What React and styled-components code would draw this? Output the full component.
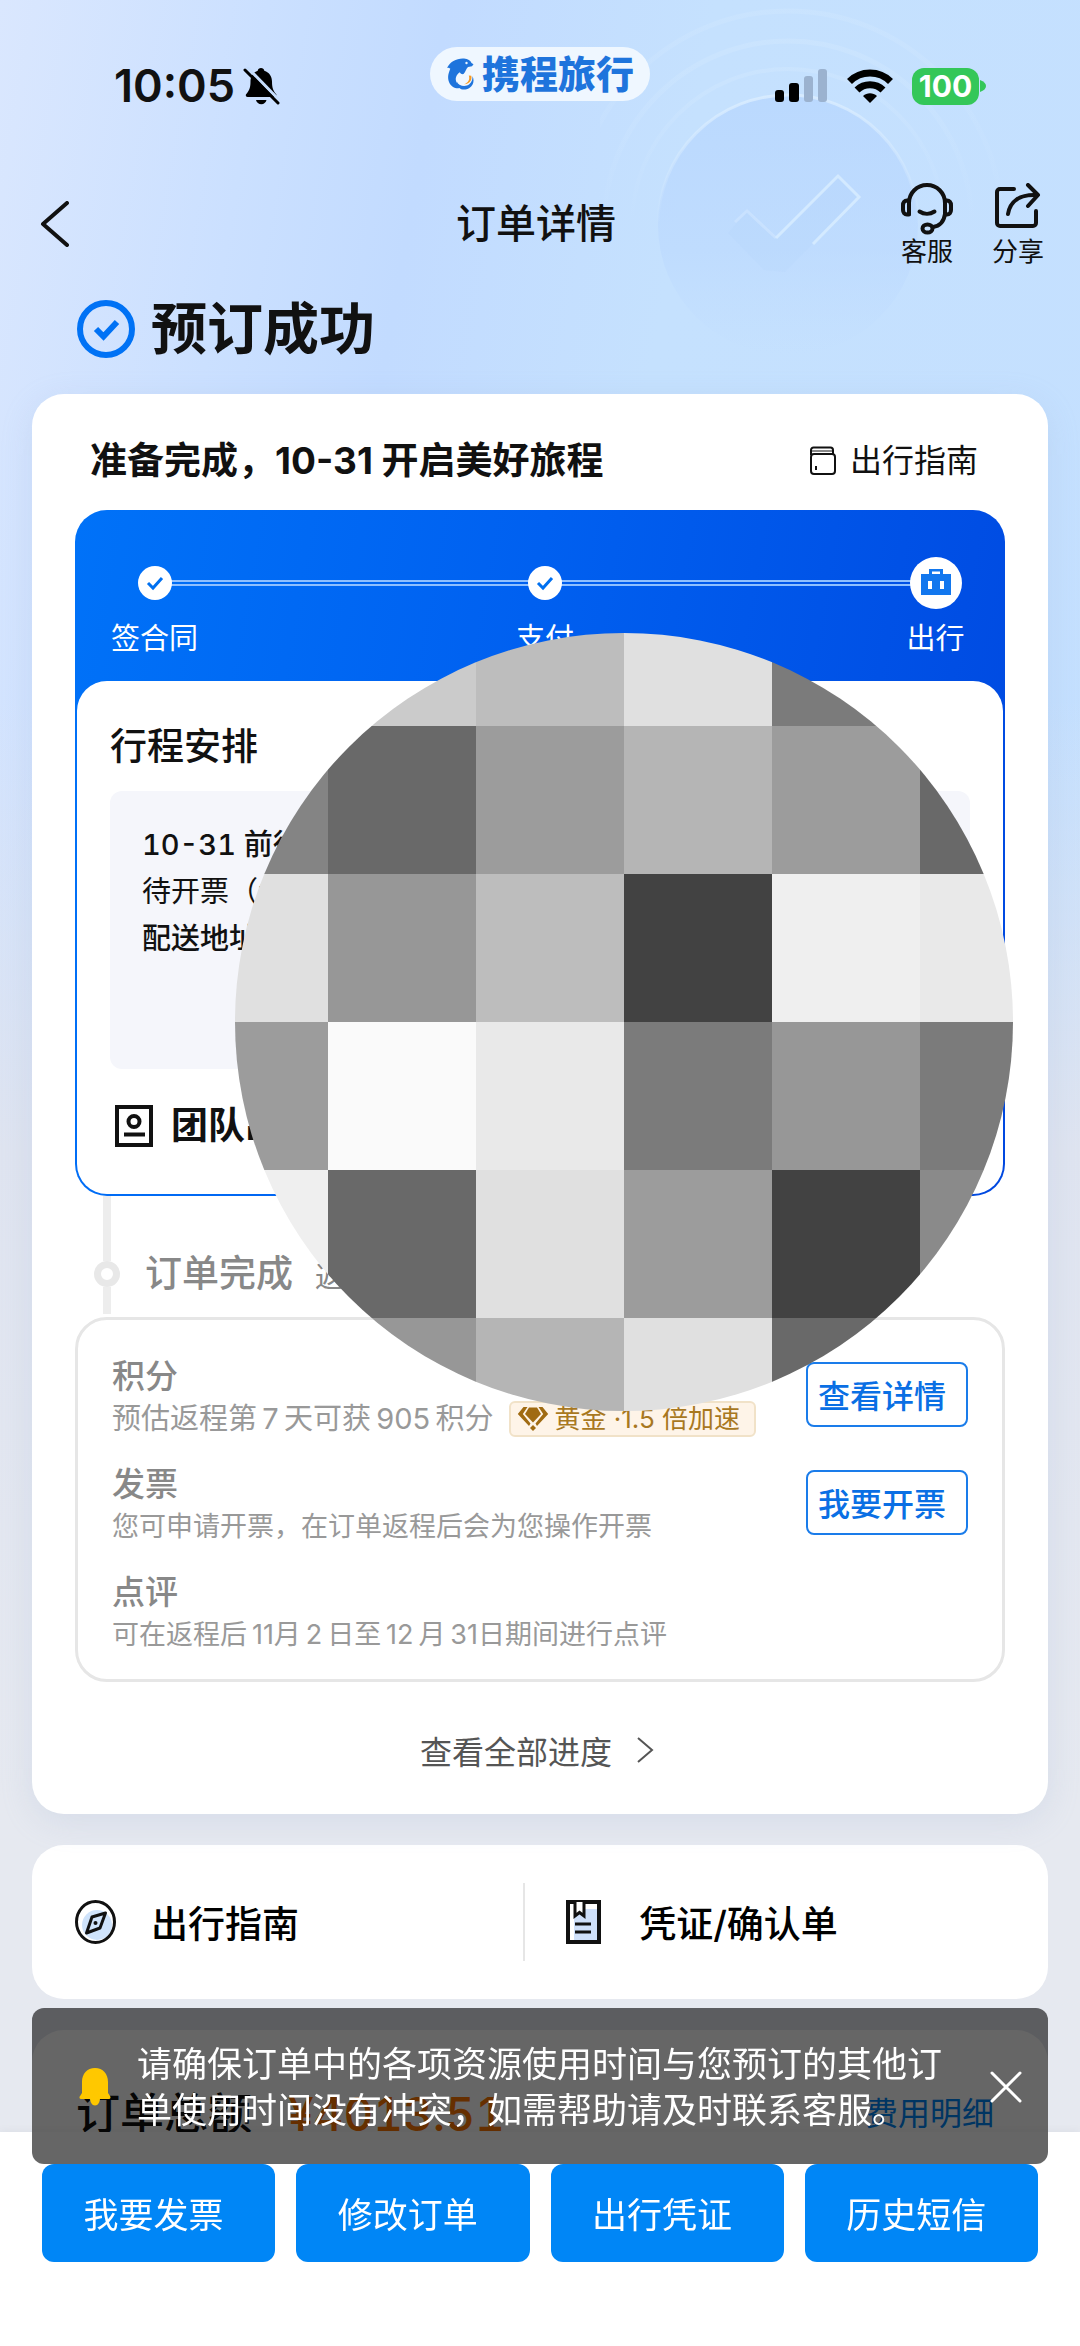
import React, { useState } from "react";
import styled, { createGlobalStyle } from "styled-components";

const ink = "#111";
const blue = "#0070f0";
const brand = "#0086f6";

const steps = [
  { label: "签合同", done: true },
  { label: "支付", done: true },
  { label: "出行", done: false },
];

const tasks = [
  {
    title: "积分",
    text: "预估返程第\u20097\u2009天可获\u2009905\u2009积分",
    large: true,
    tag: "黄金 ·1.5 倍加速",
    action: "查看详情",
  },
  { title: "发票", text: "您可申请开票，在订单返程后会为您操作开票", action: "我要开票" },
  { title: "点评", text: "可在返程后\u200911月\u20092\u2009日至\u200912\u2009月\u200931日期间进行点评" },
];

const actions = ["我要发票", "修改订单", "出行凭证", "历史短信"];

// grey levels of the privacy cover, row by row
const mosaic = [
  ["#bdbdbd", "#cbcbcb", "#bdbdbd", "#e0e0e0", "#7b7b7b", "#7b7b7b"],
  ["#848484", "#696969", "#9c9c9c", "#b5b5b5", "#9c9c9c", "#696969"],
  ["#e0e0e0", "#979797", "#bdbdbd", "#424242", "#efefef", "#e9e9e9"],
  ["#9c9c9c", "#fafafa", "#e9e9e9", "#7b7b7b", "#979797", "#7b7b7b"],
  ["#efefef", "#696969", "#e0e0e0", "#9c9c9c", "#424242", "#8a8a8a"],
  ["#979797", "#979797", "#b5b5b5", "#e0e0e0", "#696969", "#696969"],
];

const HeroArt = () => (
  <ArtSvg width="480" height="394" viewBox="600 0 480 394" fill="none">
    <defs>
      <linearGradient id="disc" x1="0" y1="0" x2="0" y2="1">
        <stop offset="0" stopColor="#b8d7fe" stopOpacity="0.8" />
        <stop offset="0.6" stopColor="#b9d7fe" stopOpacity="0.5" />
        <stop offset="1" stopColor="#bddafe" stopOpacity="0" />
      </linearGradient>
      <linearGradient id="arc" x1="0" y1="0" x2="0" y2="1">
        <stop offset="0" stopColor="#dceeff" stopOpacity="0.8" />
        <stop offset="0.5" stopColor="#dceeff" stopOpacity="0" />
      </linearGradient>
    </defs>
    <circle cx="788" cy="225" r="130" fill="url(#disc)" stroke="url(#arc)" strokeWidth="3" />
    <circle cx="788" cy="225" r="156" stroke="url(#arc)" strokeWidth="4" opacity="0.3" />
    <circle cx="788" cy="225" r="184" stroke="url(#arc)" strokeWidth="5" opacity="0.3" />
    <circle cx="788" cy="225" r="214" stroke="url(#arc)" strokeWidth="5" opacity="0.25" />
    <path d="M764 270l-36-37 19-22 29 27 62-62 21 21-74 75z" fill="#aecffb" opacity="0.15" />
    <path d="M735 222l12-11 29 27" stroke="#d0e6ff" strokeWidth="3" opacity="0.6" />
    <path d="M776 238l62-62 21 21-46 47" stroke="#d6ebff" strokeWidth="3" opacity="0.9" />
  </ArtSvg>
);

const MutedBell = () => (
  <svg width="37" height="38" viewBox="0 0 37 38">
    <path
      d="M18 1c1.800 0 3 1 3.300 2.700C26.500 5.400 29 9.500 29 14.500c0 7 1.500 9.500 4 12.500.9 1.100.5 3-1.300 3H4.600c-1.800 0-2.300-1.900-1.300-3 2.500-3 4.200-5.500 4.200-12.500C7.500 9.500 9.700 5.400 14.700 3.700 15 2 16.200 1 18 1z"
      fill="#000"
    />
    <path d="M13 33h10.500c-.6 2.600-2.600 4.300-5.200 4.300S13.600 35.600 13 33z" fill="#000" />
    <path d="M4 0l33 34" stroke="#c5ddfd" strokeWidth="3" />
    <path d="M2 3l33 33" stroke="#000" strokeWidth="3" strokeLinecap="round" />
  </svg>
);

const Dolphin = () => (
  <svg width="30" height="32" viewBox="0 0 30 32">
    <path
      d="M1 10C4 3.500 11 0 18 .5c4 .2 6.500 2 7.500 4.500l2 1.300-1.500 2-4 .8c-2 2-2.200 4.500-4.500 7-2 .2-3-.6-3.700-1.900C10 17 8.500 21 11 25c1.400 2.300 4 3.600 7.500 3.300C13 32 5.500 30.500 3 24 1 18.500 3 14 4.300 10.800 3 9.600 2 9.600 1 10z"
      fill="#1e74dc"
    />
    <path d="M11 24c2 4 8.500 5.500 12.500 2 2.600-2.400 3.200-5.200 2.900-8 2.300 4.500 1 9.600-3 12-6 3.500-12.500 1-12.400-6z" fill="#1e74dc" />
    <path d="M22.800 17.500c1.400 4-.6 7.300-4.800 8.800 5 .2 8.300-3.500 7.300-8.500z" fill="#f59a23" />
    <circle cx="20.500" cy="5" r="1.200" fill="#eaf5ff" />
  </svg>
);

const Signal = () => (
  <svg width="53" height="34" viewBox="0 0 53 34">
    <rect x="0" y="21" width="9" height="12" rx="3" fill="#000" />
    <rect x="14" y="14" width="10" height="19" rx="3" fill="#000" />
    <rect x="29" y="7" width="9" height="26" rx="3" fill="#9bb2cf" />
    <rect x="43" y="0" width="9" height="33" rx="3" fill="#9bb2cf" />
  </svg>
);

const Wifi = () => (
  <svg width="46" height="34" viewBox="0 0 46 34" fill="none" stroke="#000" strokeWidth="7">
    <path d="M2.500 12.500a29 29 0 0 1 41 0" />
    <path d="M10 21a18.500 18.500 0 0 1 26 0" />
    <path d="M16 27c4-3.700 10-3.700 14 0l-7 7z" fill="#000" stroke="none" />
  </svg>
);

const Battery = () => (
  <BatteryBox>
    <BatteryBody>100</BatteryBody>
    <svg width="6" height="12" viewBox="0 0 6 12">
      <path d="M0 0c4 1.500 6 3.500 6 6s-2 4.500-6 6z" fill="#34c759" />
    </svg>
  </BatteryBox>
);

const BackIcon = () => (
  <svg width="30" height="46" viewBox="0 0 30 46" fill="none" stroke={ink} strokeWidth="4" strokeLinecap="round" strokeLinejoin="round">
    <path d="M27 2L3 23l24 21" />
  </svg>
);

const HeadsetIcon = () => (
  <svg width="54" height="52" viewBox="0 0 54 52" fill="none" stroke={ink} strokeWidth="4" strokeLinecap="round" strokeLinejoin="round">
    <path d="M9 31V20C9 10 17 2 27 2s18 8 18 18v11" />
    <path d="M9 17.500H7c-2.500 0-4 2-4 4.500v5c0 2.500 1.500 4.500 4 4.500h2" />
    <path d="M45 17.500h2c2.500 0 4 2 4 4.500v5c0 2.500-1.500 4.500-4 4.500h-2" />
    <path d="M45 31c-1 7-5 12-12 13" />
    <ellipse cx="27.500" cy="45.500" rx="5" ry="4" />
    <path d="M19.500 28.500c4.500 3 10.500 3 15 0" />
  </svg>
);

const ShareIcon = () => (
  <svg width="46" height="46" viewBox="0 0 46 46" fill="none" stroke={ink} strokeWidth="4" strokeLinecap="round" strokeLinejoin="round">
    <path d="M19 6H5a3 3 0 0 0-3 3v31a3 3 0 0 0 3 3h33a3 3 0 0 0 3-3V28" />
    <path d="M13 31c2-12 11-20 29-19" />
    <path d="M33 2l10 10-10 11" />
  </svg>
);

const SuccessIcon = () => (
  <svg width="58" height="58" viewBox="0 0 58 58" fill="none" stroke="#0072f5">
    <circle cx="29" cy="29" r="26" strokeWidth="6" />
    <path d="M19 29l7.500 7.500L40 22" strokeWidth="6" />
  </svg>
);

const GuideIcon = () => (
  <svg width="28" height="30" viewBox="0 0 28 30" fill="none" stroke={ink} strokeWidth="2">
    <path d="M2 9V4a2.500 2.500 0 0 1 2.500-2.500h17A2.500 2.500 0 0 1 24 4v4" />
    <path d="M2 5h22" strokeWidth="1" />
    <rect x="2" y="8" width="24" height="20" rx="3" />
    <path d="M7 20v4" />
  </svg>
);

const CheckDot = () => (
  <svg width="34" height="34" viewBox="0 0 34 34" fill="none">
    <circle cx="17" cy="17" r="17" fill="#fff" />
    <path d="M10 17l5 5 9-10" stroke={blue} strokeWidth="3" />
  </svg>
);

const BagDot = () => (
  <svg width="52" height="52" viewBox="0 0 52 52">
    <circle cx="26" cy="26" r="26" fill="#fff" />
    <path d="M11 17h8v-5h14v5h8v21H11z" fill="#1277ee" />
    <path d="M22 17v-2.500h8V17z" fill="#fff" />
    <path d="M18 24h4v8h-4zM30 24h4v8h-4z" fill="#fff" />
  </svg>
);

const TeamIcon = () => (
  <svg width="38" height="42" viewBox="0 0 38 42" fill="none" stroke={ink} strokeWidth="4">
    <rect x="2" y="2" width="34" height="38" />
    <circle cx="19" cy="16.500" r="5.500" />
    <path d="M9 29.500h21" />
  </svg>
);

const Gem = () => (
  <svg width="32" height="26" viewBox="0 0 32 26" fill="#a06b12">
    <path d="M6.500 1h4L5.800 8l7.700 9.500L12 20 .8 8z" />
    <path d="M25.500 1h-4l4.700 7-7.700 9.500L20 20 31.200 8z" />
    <path d="M12 1.500h8L24 8l-8 8.500L8 8z" />
    <path d="M16 19l3 3-3 3-3-3z" />
  </svg>
);

const MoreIcon = () => (
  <svg width="18" height="28" viewBox="0 0 18 28" fill="none" stroke="#555" strokeWidth="2">
    <path d="M2 2l14 12L2 26" />
  </svg>
);

const CompassIcon = () => (
  <svg width="41" height="44" viewBox="0 0 41 44" fill="none" stroke={ink} strokeWidth="3">
    <circle cx="22" cy="25" r="15" fill="#cfe3fb" stroke="none" />
    <ellipse cx="20.500" cy="22" rx="19" ry="20.500" />
    <path d="M30.500 13L17 17l-5.500 16L25 28z" strokeLinejoin="round" />
    <circle cx="20.500" cy="23" r="2" fill={ink} stroke="none" />
  </svg>
);

const VoucherIcon = () => (
  <svg width="41" height="44" viewBox="0 0 41 44" fill="none" stroke={ink} strokeWidth="4">
    <path d="M11 9h24v32H11z" fill="#cfe0fa" stroke="none" />
    <rect x="5" y="2" width="31" height="40" />
    <path d="M12 2v14l4.500-3.500L21 16V2" fill="#fff" strokeWidth="3" />
    <path d="M12 24h16M12 32h16" strokeWidth="3" />
  </svg>
);

const BellIcon = () => (
  <svg width="34" height="40" viewBox="0 0 34 40" fill="#ffc800">
    <path d="M17 1c8 0 13 6 13 14v11l2 3c1 1.500.5 3-1 3H3c-1.500 0-2-1.500-1-3L4 26V15C4 7 9 1 17 1z" />
    <path d="M12 31h10c0 4-2 7.500-5 7.500S12 35 12 31z" />
  </svg>
);

const CloseIcon = () => (
  <svg width="32" height="32" viewBox="0 0 32 32" stroke="#fff" strokeWidth="3" strokeLinecap="round">
    <path d="M2 2l28 28M30 2L2 30" />
  </svg>
);

const Cover = () => (
  <CoverSvg width="778" height="778" viewBox="55 55 778 778" aria-hidden="true">
    <defs>
      <clipPath id="round">
        <circle cx="444" cy="444" r="389" />
      </clipPath>
    </defs>
    <g clipPath="url(#round)">
      {mosaic.map((row, y) =>
        row.map((color, x) => (
          <rect key={`${x}-${y}`} x={x * 148} y={y * 148} width="148" height="148" fill={color} />
        ))
      )}
    </g>
  </CoverSvg>
);

const App = () => {
  const [showNotice, setShowNotice] = useState(true);

  return (
    <Page>
      <GlobalStyle />
      <Hero>
        <HeroArt />
        <StatusBar>
          <Clock>
            10:05
            <MutedBell />
          </Clock>
          <BrandPill>
            <Dolphin />
            携程旅行
          </BrandPill>
          <Indicators>
            <Signal />
            <Wifi />
            <Battery />
          </Indicators>
        </StatusBar>

        <NavBar>
          <BackButton aria-label="返回">
            <BackIcon />
          </BackButton>
          <NavTitle>订单详情</NavTitle>
          <NavActions>
            <NavAction>
              <NavIcon><HeadsetIcon /></NavIcon>
              客服
            </NavAction>
            <NavAction>
              <NavIcon><ShareIcon /></NavIcon>
              分享
            </NavAction>
          </NavActions>
        </NavBar>

        <Headline>
          <SuccessIcon />
          <h1>预订成功</h1>
        </Headline>
      </Hero>

      <Content>
        <ProgressCard>
          <CardHeader>
            <CardTitle>准备完成，10-31 开启美好旅程</CardTitle>
            <GuideLink href="#guide">
              <GuideIcon />
              出行指南
            </GuideLink>
          </CardHeader>

          <Journey>
            <Steps>
              {steps.map((step) => (
                <Step key={step.label}>
                  <StepDot>{step.done ? <CheckDot /> : <BagDot />}</StepDot>
                  {step.label}
                </Step>
              ))}
            </Steps>
            <Plan>
              <PlanTitle>行程安排</PlanTitle>
              <PlanBox>
                <PlanLine $strong>10-31 前往</PlanLine>
                <PlanLine>待开票（纸</PlanLine>
                <PlanLine $strong>配送地址</PlanLine>
              </PlanBox>
              <TeamRow>
                <TeamIcon />
                团队出
              </TeamRow>
            </Plan>
          </Journey>

          <Finish>
            <Track>
              <TrackLine $size={65} />
              <TrackRing />
              <TrackLine $size={27} />
            </Track>
            <FinishTitle>订单完成</FinishTitle>
            <FinishNote>返</FinishNote>
          </Finish>

          <Tasks>
            {tasks.map((task) => (
              <Task key={task.title}>
                <div>
                  <TaskTitle>{task.title}</TaskTitle>
                  <TaskText $large={task.large}>
                    {task.text}
                    {task.tag && (
                      <Tag>
                        <Gem />
                        {task.tag}
                      </Tag>
                    )}
                  </TaskText>
                </div>
                {task.action && <OutlineButton>{task.action}</OutlineButton>}
              </Task>
            ))}
          </Tasks>

          <MoreLink href="#progress">
            查看全部进度
            <MoreIcon />
          </MoreLink>

          <Cover />
        </ProgressCard>

        <QuickCard>
          <QuickLink href="#guide">
            <CompassIcon />
            出行指南
          </QuickLink>
          <Divider />
          <QuickLink href="#voucher">
            <VoucherIcon />
            凭证/确认单
          </QuickLink>
        </QuickCard>

        <TotalCard>
          <TotalLabel>订单总额</TotalLabel>
          <TotalPrice>¥4013.51</TotalPrice>
          <FeeLink href="#fees">费用明细</FeeLink>
        </TotalCard>
      </Content>

      <BottomBar>
        {actions.map((label) => (
          <PrimaryButton key={label}>{label}</PrimaryButton>
        ))}
      </BottomBar>

      {showNotice && (
        <Notice role="status">
          <BellIcon />
          <NoticeText>
            请确保订单中的各项资源使用时间与您预订的其他订单使用时间没有冲突，如需帮助请及时联系客服。
          </NoticeText>
          <CloseButton aria-label="关闭" onClick={() => setShowNotice(false)}>
            <CloseIcon />
          </CloseButton>
        </Notice>
      )}
    </Page>
  );
};

export default App;

const GlobalStyle = createGlobalStyle`
  *, *::before {
    box-sizing: border-box;
  }
  body {
    margin: 0;
    color: ${ink};
    font-family: Inter, "Noto Sans CJK SC", sans-serif;
  }
  h1, h2, h3, p {
    margin: 0;
    font-size: inherit;
    font-weight: inherit;
  }
  button {
    padding: 0;
    border: none;
    background: none;
    color: inherit;
    font: inherit;
    cursor: pointer;
  }
  a {
    color: inherit;
    text-decoration: none;
  }
  svg {
    display: block;
    flex: none;
  }
`;

const Page = styled.div`
  min-height: 100vh;
  padding-bottom: 175px;
  background:
    linear-gradient(180deg, rgba(230, 233, 240, 0) 0, rgba(230, 233, 240, 0) 700px, #dfe4f0 1150px, #e6e9f0 1800px),
    linear-gradient(100deg, #dae7fe 0, #cbe0ff 18%, #c2dbff 30%, #c5e1fe 48%, #c4dfff 100%);
`;

const Hero = styled.header`
  position: relative;
`;

const ArtSvg = styled.svg`
  position: absolute;
  top: 0;
  right: 0;
`;

const StatusBar = styled.div`
  position: relative;
  display: grid;
  grid-template-columns: 1fr auto 1fr;
  align-items: start;
  height: 170px;
  padding: 47px 94px 0;
`;

const Clock = styled.div`
  display: flex;
  align-items: center;
  gap: 8px;
  margin-top: 12px;
  padding-left: 20px;
  font-size: 45px;
  font-weight: 600;
  line-height: 54px;
`;

const BrandPill = styled.div`
  display: flex;
  align-items: center;
  gap: 6px;
  height: 54px;
  padding: 0 16px;
  border-radius: 27px;
  background: #eff7ff;
  color: #1e74dc;
  font-size: 38px;
  font-weight: 900;
  line-height: 54px;
`;

const Indicators = styled.div`
  display: flex;
  align-items: center;
  justify-content: flex-end;
  gap: 19px;
  height: 54px;
  margin-top: 12px;
`;

const BatteryBox = styled.div`
  display: flex;
  align-items: center;
  gap: 1px;
`;

const BatteryBody = styled.div`
  width: 67px;
  height: 37px;
  border-radius: 12px;
  background: #34c759;
  color: #fff;
  font-size: 30px;
  font-weight: 700;
  line-height: 37px;
  text-align: center;
`;

const NavBar = styled.nav`
  position: relative;
  display: grid;
  grid-template-columns: 1fr auto 1fr;
  align-items: center;
  height: 108px;
  padding: 0 36px 0 28px;
`;

const BackButton = styled.button`
  justify-self: start;
  padding: 10px 12px;
`;

const NavTitle = styled.h2`
  font-size: 40px;
  font-weight: 500;
  line-height: 50px;
`;

const NavActions = styled.div`
  display: flex;
  justify-content: flex-end;
  gap: 38px;
  padding-top: 4px;
`;

const NavAction = styled.button`
  display: flex;
  flex-direction: column;
  align-items: center;
  font-size: 26px;
  line-height: 34px;
`;

const NavIcon = styled.span`
  height: 52px;
`;

const Headline = styled.div`
  position: relative;
  display: flex;
  align-items: center;
  gap: 16px;
  padding: 22px 77px 36px;
  font-size: 56px;
  font-weight: 700;
  line-height: 58px;
`;

const Content = styled.main`
  display: flex;
  flex-direction: column;
  gap: 31px;
  padding: 0 32px;
`;

const Card = styled.section`
  border-radius: 32px;
  background: #fff;
`;

const ProgressCard = styled(Card)`
  position: relative;
  padding: 0 43px;
  box-shadow: 0 8px 32px rgba(150, 170, 205, 0.2);
`;

const CardHeader = styled.div`
  display: flex;
  align-items: center;
  justify-content: space-between;
  height: 116px;
  padding: 18px 27px 0 15px;
`;

const CardTitle = styled.h2`
  font-size: 37px;
  font-weight: 700;
  line-height: 48px;
`;

const GuideLink = styled.a`
  display: flex;
  align-items: center;
  gap: 13px;
  font-size: 32px;
  line-height: 40px;
`;

const Journey = styled.div`
  padding: 0 2px 2px;
  border-radius: 32px;
  background: linear-gradient(100deg, #0072f8 0, #0060f0 45%, #0048e0 100%);
`;

const Steps = styled.div`
  position: relative;
  display: flex;
  justify-content: space-between;
  padding: 47px 24px 24px 34px;

  &::before {
    content: "";
    position: absolute;
    top: 70px;
    left: 90px;
    right: 80px;
    height: 6px;
    border: solid #8fc0ff;
    border-width: 2px 0;
  }
`;

const Step = styled.div`
  position: relative;
  display: flex;
  flex-direction: column;
  align-items: center;
  gap: 12px;
  width: 87px;
  color: #fff;
  font-size: 29px;
  line-height: 36px;
`;

const StepDot = styled.span`
  display: flex;
  align-items: center;
  height: 52px;
`;

const Plan = styled.div`
  padding: 46px 33px;
  border-radius: 30px;
  background: #fff;
`;

const PlanTitle = styled.h3`
  font-size: 37px;
  font-weight: 500;
  line-height: 40px;
`;

const PlanBox = styled.div`
  height: 278px;
  margin: 24px 0 35px;
  padding: 30px 32px;
  border-radius: 12px;
  background: #f5f6fb;
`;

const PlanLine = styled.p`
  font-size: 29px;
  font-variant-numeric: tabular-nums;
  font-weight: ${({ $strong }) => ($strong ? 500 : 400)};
  line-height: 47px;
`;

const TeamRow = styled.div`
  display: flex;
  align-items: center;
  gap: 18px;
  padding-left: 5px;
  font-size: 37px;
  font-weight: 700;
  line-height: 44px;
`;

const Finish = styled.div`
  display: flex;
  align-items: center;
  height: 121px;
  padding-left: 19px;
  color: #888;
`;

const Track = styled.div`
  display: flex;
  flex-direction: column;
  align-self: flex-start;
  align-items: center;
  width: 26px;
  margin-right: 25px;
`;

const TrackLine = styled.span`
  width: 8px;
  height: ${({ $size }) => $size}px;
  background: #ededed;
`;

const TrackRing = styled.span`
  width: 26px;
  height: 26px;
  border: 7px solid #e8e8e8;
  border-radius: 50%;
`;

const FinishTitle = styled.h3`
  padding-top: 34px;
  font-size: 37px;
  font-weight: 500;
  line-height: 40px;
`;

const FinishNote = styled.p`
  margin-left: 22px;
  padding-top: 43px;
  font-size: 29px;
  line-height: 40px;
`;

const Tasks = styled.div`
  display: flex;
  flex-direction: column;
  gap: 22px;
  padding: 36px 34px 21px;
  border: 3px solid #e6e6e6;
  border-radius: 32px;
`;

const Task = styled.div`
  display: flex;
  justify-content: space-between;
`;

const TaskTitle = styled.h3`
  color: #888;
  font-size: 33px;
  font-weight: 500;
  line-height: 40px;
`;

const TaskText = styled.p`
  display: flex;
  align-items: center;
  gap: 16px;
  color: #999;
  font-size: ${({ $large }) => ($large ? 29 : 27)}px;
  line-height: 46px;
`;

const Tag = styled.span`
  display: flex;
  align-items: center;
  gap: 5px;
  height: 36px;
  padding: 0 14px 0 6px;
  border: 2px solid #f1e2c8;
  border-radius: 6px;
  background: #fef4e8;
  color: #a8781f;
  font-size: 26px;
  line-height: 32px;
`;

const OutlineButton = styled.button`
  width: 162px;
  height: 65px;
  margin-top: 6px;
  padding: 0 20px 2px 10px;
  border: 2px solid #1a7cea;
  border-radius: 8px;
  color: #0a6fe4;
  font-size: 32px;
  font-weight: 500;
  white-space: nowrap;
`;

const MoreLink = styled.a`
  display: flex;
  align-items: center;
  justify-content: center;
  gap: 24px;
  height: 132px;
  padding: 4px 6px 0 0;
  color: #555;
  font-size: 32px;
`;

const CoverSvg = styled.svg`
  position: absolute;
  top: 239px;
  right: 35px;
`;

const QuickCard = styled(Card)`
  display: grid;
  grid-template-columns: 31fr 2px 33fr;
  align-items: center;
  height: 154px;
`;

const QuickLink = styled.a`
  display: flex;
  align-items: center;
  gap: 35px;
  padding-left: 43px;
  color: #000;
  font-size: 37px;
  font-weight: 500;

  &:last-child {
    padding-left: 38px;
  }
`;

const Divider = styled.span`
  height: 78px;
  background: #e6e6e6;
`;

const TotalCard = styled(Card)`
  display: flex;
  align-items: center;
  padding: 54px 54px 26px 44px;
  line-height: 60px;
`;

const TotalLabel = styled.span`
  font-size: 44px;
  font-weight: 500;
`;

const TotalPrice = styled.span`
  margin-left: 36px;
  color: #ff7700;
  font-size: 46px;
  font-variant-numeric: tabular-nums;
  font-weight: 500;
`;

const FeeLink = styled.a`
  margin-left: auto;
  color: ${brand};
  font-size: 32px;
`;

const BottomBar = styled.footer`
  position: fixed;
  left: 0;
  right: 0;
  bottom: 0;
  display: grid;
  grid-template-columns: repeat(4, 1fr);
  gap: 21px;
  padding: 32px 42px 84px;
  background: #fff;
  box-shadow: 0 -2px 8px rgba(0, 0, 0, 0.04);
`;

const PrimaryButton = styled.button`
  height: 98px;
  padding: 0 10px 2px 0;
  border-radius: 12px;
  background: ${brand};
  color: #fff;
  font-size: 35px;
`;

const Notice = styled.div`
  position: fixed;
  left: 32px;
  right: 32px;
  bottom: 182px;
  display: flex;
  align-items: center;
  height: 156px;
  padding: 2px 20px 0 46px;
  border-radius: 12px;
  background: rgba(0, 0, 0, 0.6);
  color: #fff;
`;

const NoticeText = styled.p`
  flex: 1;
  padding: 0 20px 0 25px;
  font-size: 35px;
  line-height: 46px;
`;

const CloseButton = styled.button`
  padding: 6px;
`;
